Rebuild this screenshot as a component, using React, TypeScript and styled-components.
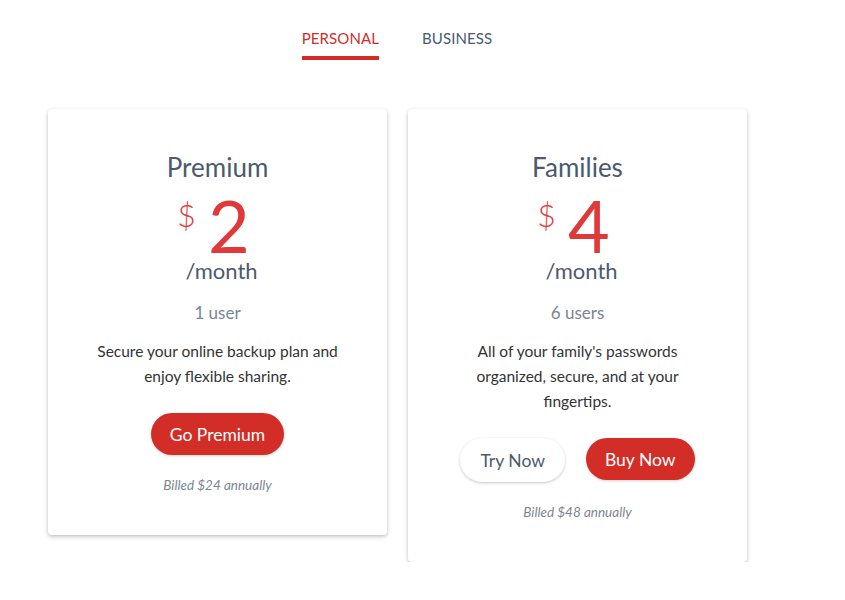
import React from "react";
import styled, { createGlobalStyle } from "styled-components";

const Global = createGlobalStyle`
  html, body { margin: 0; padding: 0; background: #fff; }
  body { font-family: Lato, "Open Sans", sans-serif; -webkit-font-smoothing: antialiased; }
  * { box-sizing: border-box; }
`;

const Page = styled.div`
  width: 698px;
  margin-left: 48px;
  padding-top: 28px;
`;

const Tabs = styled.div`
  display: flex;
  justify-content: center;
  gap: 43px;
  margin-bottom: 49px;
`;

const Tab = styled.div<{ $active?: boolean }>`
  font-size: 15px;
  letter-spacing: 0.1px;
  line-height: 20px;
  color: ${(p) => (p.$active ? "#d32d27" : "#4b5a6e")};
  padding-bottom: 8px;
  border-bottom: 4px solid ${(p) => (p.$active ? "#d32d27" : "transparent")};
`;

const Cards = styled.div`
  display: flex;
  align-items: flex-start;
  gap: 21px;
`;

const Card = styled.div`
  flex: 0 0 339px;
  background: #fff;
  border-radius: 4px;
  box-shadow: 0 1px 3px rgba(0, 0, 0, 0.12), 0 2px 5px rgba(0, 0, 0, 0.16);
  padding: 42px 24px 42px;
  display: flex;
  flex-direction: column;
  align-items: center;
  text-align: center;
`;

const Title = styled.div`
  font-size: 26px;
  line-height: 32px;
  color: #4b5a6e;
`;

const PriceRow = styled.div`
  display: flex;
  align-items: flex-start;
  gap: 12px;
  margin-top: 13px;
  margin-left: -8px;
`;

const Dollar = styled.span`
  font-size: 32px;
  font-weight: 300;
  line-height: 38px;
  color: #e0393a;
`;

const Amount = styled.span`
  font-size: 72px;
  line-height: 58px;
  color: #e0393a;
`;

const Month = styled.div`
  font-size: 22px;
  line-height: 26px;
  color: #4b5a6e;
  margin-top: 4px;
  margin-left: 8px;
`;

const Users = styled.div`
  font-size: 17px;
  line-height: 22px;
  color: #7a8592;
  margin-top: 18px;
`;

const Desc = styled.p`
  margin: 15px 0 0;
  font-size: 15.5px;
  line-height: 25px;
  color: #333;
  max-width: 270px;
`;

const Buttons = styled.div`
  display: flex;
  gap: 21px;
  margin-top: 24px;
`;

const Button = styled.button<{ $outline?: boolean }>`
  font-family: Lato, sans-serif;
  font-size: 17.5px;
  height: ${(p) => (p.$outline ? "44px" : "42px")};
  padding: 0 ${(p) => (p.$outline ? "20px" : "19px")};
  border-radius: 22px;
  border: none;
  background: ${(p) => (p.$outline ? "#fff" : "#d32d27")};
  color: ${(p) => (p.$outline ? "#4b5a6e" : "#fff")};
  box-shadow: ${(p) =>
    p.$outline ? "0 1px 3px rgba(0,0,0,0.22)" : "0 1px 3px rgba(0,0,0,0.18)"};
`;

const Billed = styled.div`
  margin-top: 22px;
  font-size: 13.5px;
  font-style: italic;
  color: #7a8592;
`;

export default function App() {
  return (
    <>
      <Global />
      <Page>
        <Tabs>
          <Tab $active>PERSONAL</Tab>
          <Tab>BUSINESS</Tab>
        </Tabs>
        <Cards>
          <Card>
            <Title>Premium</Title>
            <PriceRow>
              <Dollar>$</Dollar>
              <Amount>2</Amount>
            </PriceRow>
            <Month>/month</Month>
            <Users>1 user</Users>
            <Desc>Secure your online backup plan and enjoy flexible sharing.</Desc>
            <Buttons>
              <Button>Go Premium</Button>
            </Buttons>
            <Billed>Billed $24 annually</Billed>
          </Card>
          <Card>
            <Title>Families</Title>
            <PriceRow>
              <Dollar>$</Dollar>
              <Amount>4</Amount>
            </PriceRow>
            <Month>/month</Month>
            <Users>6 users</Users>
            <Desc>All of your family's passwords organized, secure, and at your fingertips.</Desc>
            <Buttons>
              <Button $outline>Try Now</Button>
              <Button>Buy Now</Button>
            </Buttons>
            <Billed>Billed $48 annually</Billed>
          </Card>
        </Cards>
      </Page>
    </>
  );
}
